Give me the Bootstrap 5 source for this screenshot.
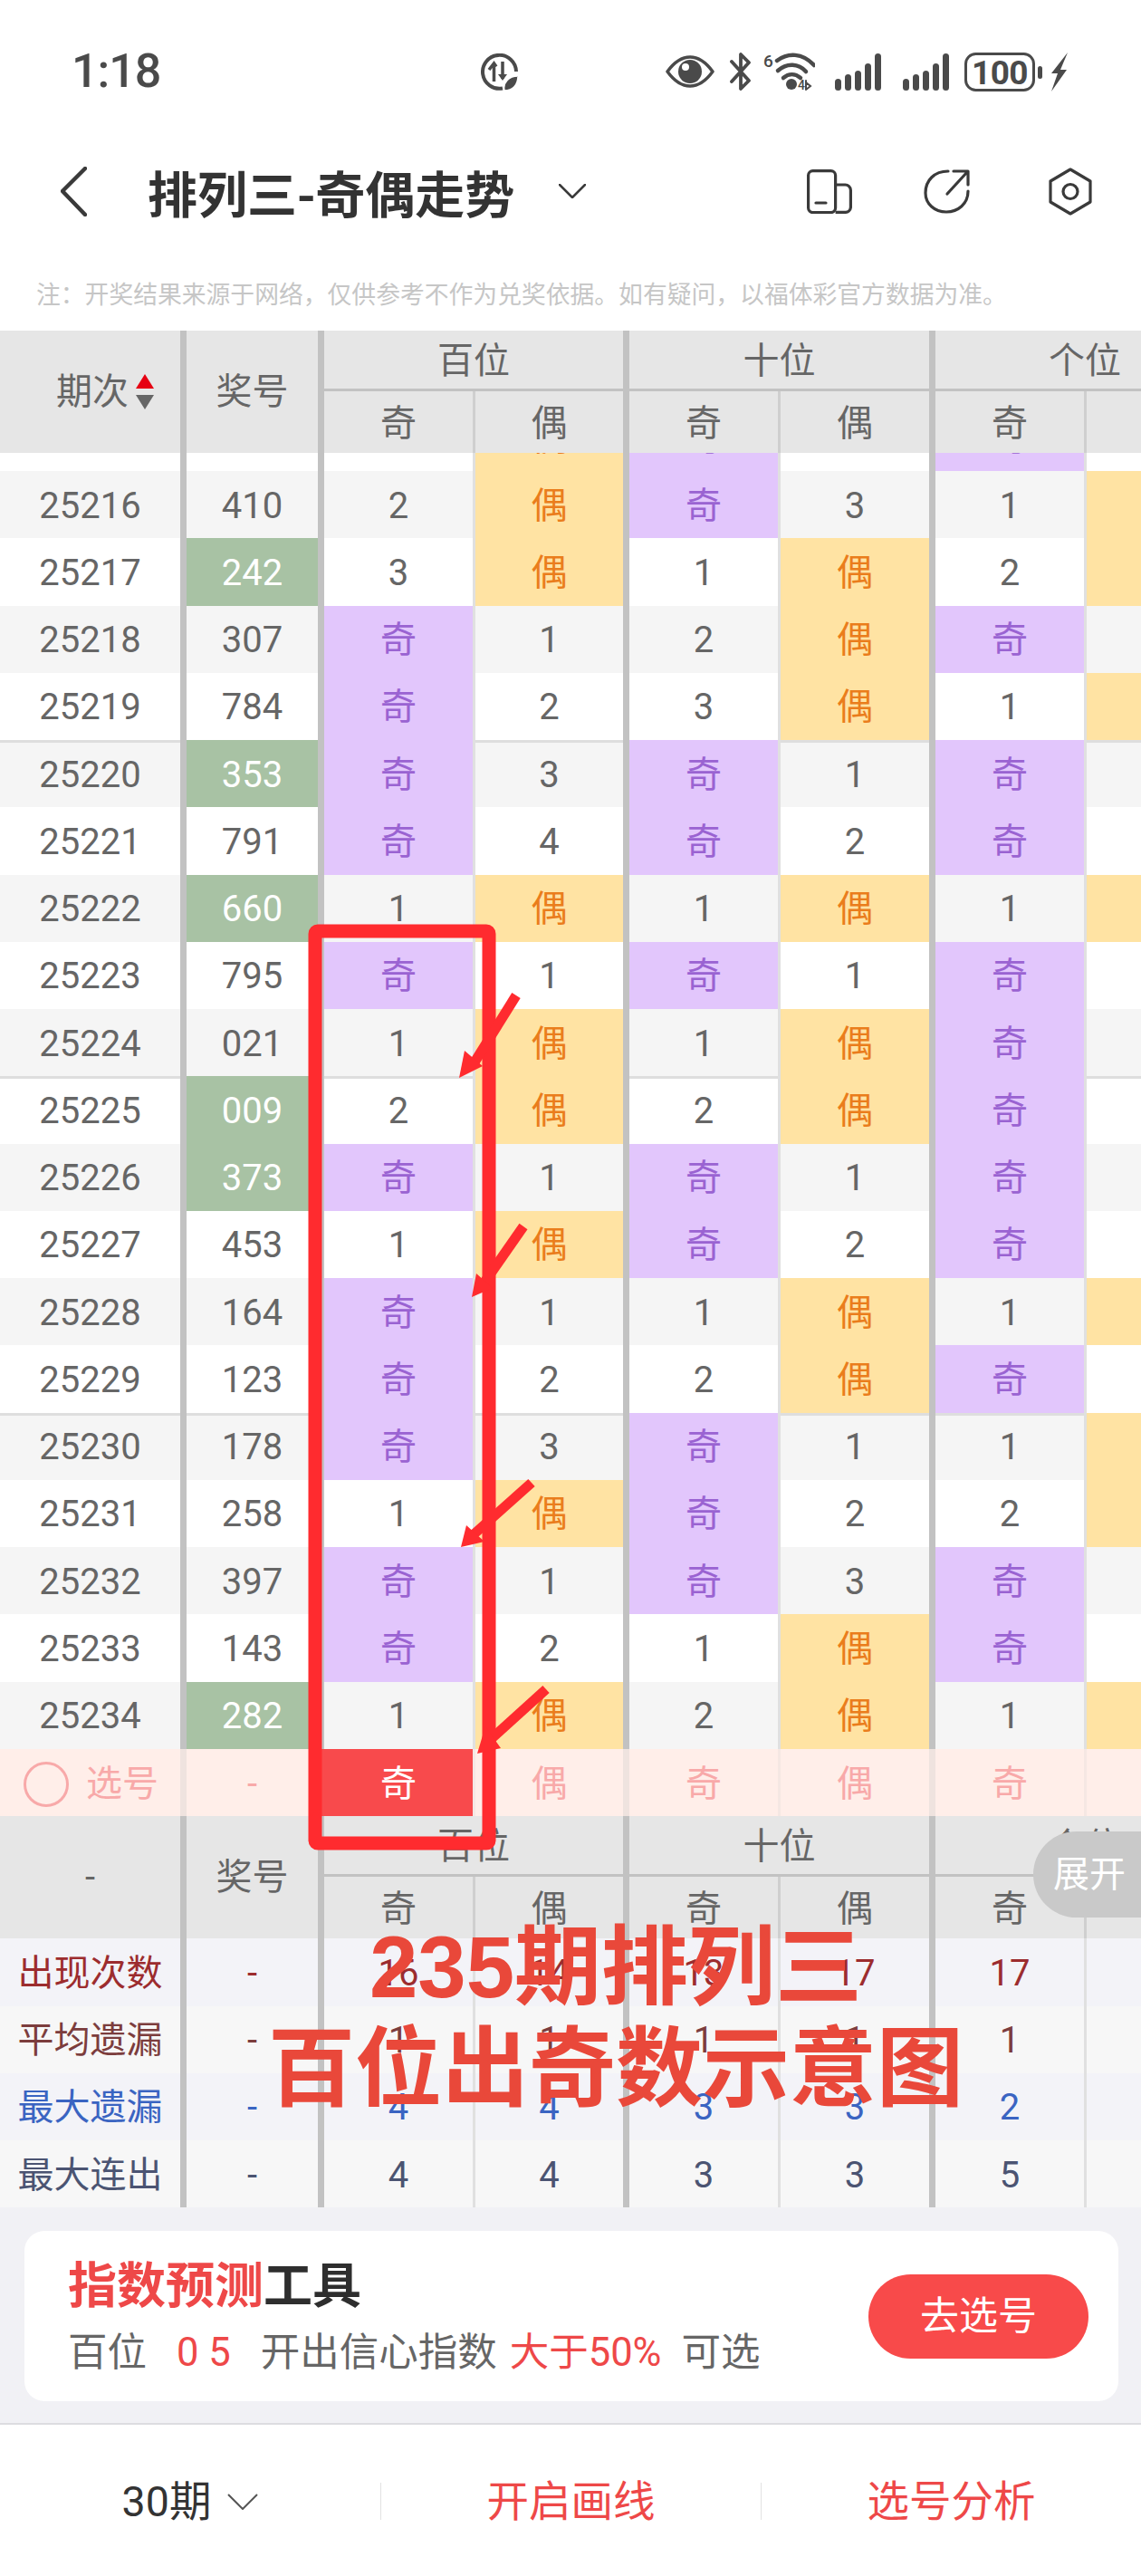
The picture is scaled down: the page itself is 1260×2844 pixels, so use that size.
<!DOCTYPE html>
<html lang="zh-CN">
<head>
  <meta charset="UTF-8">
  <meta name="viewport" content="width=device-width, initial-scale=1">
  <title>排列三-奇偶走势</title>
  <link href="https://cdn.jsdelivr.net/npm/bootstrap@5.3.0/dist/css/bootstrap.min.css" rel="stylesheet">
  <style>
    body {
      background: #fff;
      font-family: Roboto, "Noto Sans CJK SC", sans-serif;
      color: #666;
    }
    .screen { width: 1260px; height: 2844px; overflow: hidden; }

    /* status bar */
    .status-bar { height: 156px; padding: 2px 81px 0 79px; }
    .clock { font-size: 52px; font-weight: 500; color: #4a4a4a; letter-spacing: -1px; width: 99px; line-height: 1; }
    .leaf-icon { margin-left: 353px; }
    .st-bt { margin-left: 16px; }
    .st-wifi { margin-left: 13px; }
    .st-sig1 { margin-left: 22px; }
    .st-sig2 { margin-left: 24px; }
    .st-bat { margin-left: 17px; }
    .st-bolt { margin-left: 9px; }

    /* title bar */
    .title-bar { height: 110px; padding-left: 67px; padding-right: 53px; }
    .page-title { font-size: 55px; font-weight: 700; color: #333; margin-left: 67px; line-height: 1; white-space: nowrap; font-family: "Noto Sans CJK SC", sans-serif; }
    .title-chev { margin-left: 49px; }
    .act-share { margin-left: 79px; }
    .act-hex { margin-left: 86px; }

    .note-line { height: 99px; padding: 41px 0 0 40px; font-size: 26.8px; line-height: 34px; color: #c6c6c6; white-space: nowrap; font-family: "Noto Sans CJK SC", sans-serif; }

    /* trend table */
    .trend-grid {
      display: grid;
      grid-template-columns: 206px 152px 167px 170px 167px 171px 167px 170px;
      width: 1370px;
      font-size: 40px;
    }
    .tcell { display: flex; align-items: center; justify-content: center; height: 74.25px; line-height: 1; padding-top: 3px; }
    .bd-big { border-right: 7px solid #c2c2c2; }
    .bd-sub { border-right: 3px solid #e0e0e0; }

    .head-grid { background: #e6e6e6; grid-template-rows: 67px 68px; color: #666; }
    .head-grid > div { display: flex; align-items: center; justify-content: center; }
    .head-tall { grid-row: span 2; }
    .head-group { grid-column: span 2; border-bottom: 3px solid #c2c2c2; padding-top: 3px; }
    .head-sub { padding-top: 3px; }
    .head-sub.bd-sub { border-right-color: #cfcfcf; }
    .head-first { justify-content: flex-start !important; padding-left: 62px; gap: 8px; }
    .sort-svg { width: 20px; height: 40px; }

    .scroll-body { height: 1431px; overflow: hidden; }
    .scroll-body > .trend-grid:first-child { margin-top: -54.25px; }
    .row-even .tcell { background: #f5f5f5; }
    .row-odd .tcell { background: #fff; }
    .group-top .tcell.plain { box-shadow: inset 0 3px 0 #dedede; }
    .trend-grid .tcell.hit-odd { background: #e2c6fc; color: #9a63d2; }
    .trend-grid .tcell.hit-even { background: #ffe3a3; color: #ea7d1c; }
    .trend-grid .tcell.hit-pair { background: #a8c2a4; color: #fff; }

    .pick-row .tcell { background: #ffeee9; color: #f8a9a9; }
    .pick-row .bd-big { border-right-color: #efe3df; }
    .pick-row .bd-sub { border-right-color: #f5e7e3; }
    .pick-first { justify-content: flex-start !important; padding-left: 26px; gap: 19px; }
    .pick-ring { width: 50px; height: 50px; border: 3px solid #f8a9a9; border-radius: 50%; }
    .trend-grid .tcell.pick-on { background: #f84a4c; color: #fff; box-shadow: -7px 0 0 #f84a4c; position: relative; }

    .stat-a .tcell { background: #f3f3f8; }
    .stat-b .tcell { background: #f7f7f7; }
    .tone-red { color: #9c2c2e; }
    .tone-brown { color: #7c3d3d; }
    .tone-blue { color: #3a64c2; }
    .tone-slate { color: #4b5472; }

    /* bottom part */
    .tool-zone { background: #f1f1f5; height: 240px; padding: 26px 25px 0 27px; border-bottom: 2px solid #dcdce0; }
    .tool-card { height: 188px; border: 0; border-radius: 22px; padding: 27px 33px 0 48px; }
    .tool-title { font-size: 54px; font-weight: 700; line-height: 60px; color: #2e2e2e; font-family: "Noto Sans CJK SC", sans-serif; }
    .tool-red { color: #ee4848; }
    .tool-sub { font-size: 43.5px; line-height: 54px; margin-top: 21px; color: #666; white-space: nowrap; }
    .sp-a { margin-left: 33px; }
    .sp-b { margin-left: 14px; }
    .sp-c { margin-left: 22px; }
    .go-btn { width: 243px; height: 93px; margin-top: 21px; background: #f84a4a; color: #fff; font-size: 43px; line-height: 1; border: 0; }
    .go-btn:hover { background: #f84a4a; color: #fff; }

    .foot-bar { padding-top: 64px; }
    .foot-item { width: 420px; height: 41px; font-size: 46.500px; line-height: 1; gap: 18px; color: #333; }
    .foot-item + .foot-item { border-left: 1px solid #e2e2e2; color: #ee4848; }

    /* things lying on top of the table */
    .mark-svg { left: 0; top: 0; width: 1260px; height: 2844px; pointer-events: none; }
    .open-pill { top: 2022px; right: 0; width: 119px; height: 95px; background: #c9c9c9; color: #fff; font-size: 40px; border-radius: 48px 0 0 48px; padding-left: 22px; }
    .big-caption { left: 0; top: 2116px; width: 1360px; text-align: center; font-family: "Liberation Sans", "Noto Sans CJK SC", sans-serif; font-weight: 700; font-size: 96px; line-height: 112px; color: #e9483a; }
  </style>
</head>
<body>
<div class="screen position-relative">

  <!-- status bar -->
  <div class="status-bar d-flex align-items-center">
    <span class="clock">1:18</span>
    <svg class="leaf-icon" width="41" height="41" viewBox="0 0 41 41" fill="none" stroke="#4a4a4a">
      <path d="M24 38.500A18.500 18.500 0 1 1 39 20" stroke-width="4"/>
      <path d="M14.500 31V12M9 18L14.500 11L17 14.500M24 9V28" stroke-width="3.500"/>
      <path d="M19 23L24 30L29 23Z" fill="#4a4a4a" stroke="none"/>
      <path d="M26 41C24 32 31 25 41 25C41 35 35 41 26 41Z" fill="#4a4a4a" stroke="#fff" stroke-width="1.500"/>
    </svg>
    <div class="ms-auto d-flex align-items-center">
      <svg width="54" height="36" viewBox="0 0 54 36">
        <path d="M2 18C10 7 18 2 27 2S44 7 52 18C44 29 36 34 27 34S10 29 2 18Z" fill="none" stroke="#4a4a4a" stroke-width="3.500" stroke-linejoin="round"/>
        <circle cx="27" cy="18" r="13" fill="#4a4a4a"/>
        <circle cx="22" cy="13" r="4" fill="#fff"/>
      </svg>
      <svg class="st-bt" width="25" height="42" viewBox="0 0 25 42" fill="none" stroke="#4a4a4a" stroke-width="3.800" stroke-linecap="round" stroke-linejoin="round">
        <path d="M3 10L22 31L13 40V26M3 32L22 11L13 2V16"/>
      </svg>
      <svg class="st-wifi" width="57" height="42" viewBox="0 0 57 42" fill="none" stroke="#4a4a4a" stroke-linecap="round">
        <text x="0" y="16" font-family="Roboto" font-size="19" font-weight="500" fill="#4a4a4a" stroke="none">6</text>
        <path d="M15 9C27 0 43 0 56 14" stroke-width="4.500"/>
        <path d="M16 20C26 11 39 12 47 21" stroke-width="4.500"/>
        <path d="M22 28C28 23 35 23 41 28" stroke-width="4.500"/>
        <circle cx="31" cy="35" r="6" fill="#4a4a4a" stroke="none"/>
        <text x="38" y="41" font-family="Roboto" font-size="14" font-weight="500" fill="#4a4a4a" stroke="none">4</text>
        <path d="M47 31V41M47 33L52 37L47 41" stroke-width="2"/>
      </svg>
      <svg class="st-sig1" width="51" height="41" viewBox="0 0 51 41" fill="#4a4a4a">
        <rect x="0" y="28" width="7" height="13" rx="3.500"/><rect x="11" y="23" width="7" height="18" rx="3.500"/><rect x="22" y="19" width="7" height="22" rx="3.500"/><rect x="33" y="11" width="7" height="30" rx="3.500"/><rect x="44" y="0" width="7" height="41" rx="3.500"/>
      </svg>
      <svg class="st-sig2" width="51" height="41" viewBox="0 0 51 41" fill="#4a4a4a">
        <rect x="0" y="28" width="7" height="13" rx="3.500"/><rect x="11" y="23" width="7" height="18" rx="3.500"/><rect x="22" y="19" width="7" height="22" rx="3.500"/><rect x="33" y="11" width="7" height="30" rx="3.500"/><rect x="44" y="0" width="7" height="41" rx="3.500"/>
      </svg>
      <svg class="st-bat" width="86" height="43" viewBox="0 0 86 43">
        <rect x="1.500" y="1.500" width="75" height="40" rx="11" fill="none" stroke="#4a4a4a" stroke-width="3"/>
        <text x="39" y="35" text-anchor="middle" font-family="Roboto" font-size="37" font-weight="700" letter-spacing="-0.500" fill="#4a4a4a">100</text>
        <rect x="81" y="15" width="5" height="14" rx="2.500" fill="#4a4a4a"/>
      </svg>
      <svg class="st-bolt" width="19" height="43" viewBox="0 0 19 43" fill="#4a4a4a">
        <path d="M19 0L1 23H8L1 43L18 19H11Z"/>
      </svg>
    </div>
  </div>

  <!-- title bar -->
  <div class="title-bar d-flex align-items-center">
    <svg width="29" height="55" viewBox="0 0 29 55" fill="none" stroke="#3a3a3a" stroke-width="4.500" stroke-linecap="round" stroke-linejoin="round"><path d="M27 2L2 27L27 53"/></svg>
    <span class="page-title">排列三-奇偶走势</span>
    <svg class="title-chev" width="30" height="16" viewBox="0 0 30 16" fill="none" stroke="#3a3a3a" stroke-width="2.500" stroke-linecap="round" stroke-linejoin="round"><path d="M1 1L15 15L29 1"/></svg>
    <div class="ms-auto d-flex align-items-center">
      <svg width="50" height="49" viewBox="0 0 50 49" fill="none" stroke="#3a3a3a" stroke-width="3.200" stroke-linejoin="round">
        <rect x="1.600" y="1.600" width="30" height="46" rx="5"/>
        <path d="M31.600 17H42A6 6 0 0 1 48.400 23V42A6 6 0 0 1 42 47.400H31.600"/>
        <path d="M10 37H21" stroke-linecap="round"/>
      </svg>
      <svg class="act-share" width="51" height="49" viewBox="0 0 51 49" fill="none" stroke="#3a3a3a" stroke-width="3.200" stroke-linecap="round" stroke-linejoin="round">
        <path d="M27 2C12 2 2 12 2 26C2 38 12 47 25 47C38 47 49 38 49 24"/>
        <path d="M26 27L48 3M33 2H49V17"/>
      </svg>
      <svg class="act-hex" width="50" height="53" viewBox="0 0 50 53" fill="none" stroke="#3a3a3a" stroke-width="3.200" stroke-linejoin="round">
        <path d="M25 2L47 15V38L25 51L3 38V15Z"/>
        <circle cx="25" cy="26.500" r="8"/>
      </svg>
    </div>
  </div>

  <div class="note-line">注：开奖结果来源于网络，仅供参考不作为兑奖依据。如有疑问，以福体彩官方数据为准。</div>

  <!-- table head -->
  <div class="trend-grid head-grid">
    <div class="head-tall head-first bd-big">
      <span>期次</span>
      <svg class="sort-svg" viewBox="0 0 20 40"><path d="M10 0L20 16H0Z" fill="#e60012"/><path d="M0 23H20L10 39Z" fill="#666"/></svg>
    </div>
    <div class="head-tall bd-big">奖号</div>
    <div class="head-group bd-big">百位</div>
    <div class="head-group bd-big">十位</div>
    <div class="head-group bd-big">个位</div>
    <div class="head-sub bd-sub">奇</div><div class="head-sub bd-big">偶</div>
    <div class="head-sub bd-sub">奇</div><div class="head-sub bd-big">偶</div>
    <div class="head-sub bd-sub">奇</div><div class="head-sub bd-big">偶</div>
  </div>

  <!-- draw rows, filled by script -->
  <div class="scroll-body" id="drawRows"></div>

  <!-- pick row -->
  <div class="trend-grid pick-row">
    <div class="tcell pick-first bd-big"><span class="pick-ring"></span><span>选号</span></div>
    <div class="tcell bd-big">-</div>
    <div class="tcell pick-on bd-sub">奇</div><div class="tcell bd-big">偶</div>
    <div class="tcell bd-sub">奇</div><div class="tcell bd-big">偶</div>
    <div class="tcell bd-sub">奇</div><div class="tcell bd-big">偶</div>
  </div>

  <!-- head repeated under the rows -->
  <div class="trend-grid head-grid">
    <div class="head-tall bd-big">-</div>
    <div class="head-tall bd-big">奖号</div>
    <div class="head-group bd-big">百位</div>
    <div class="head-group bd-big">十位</div>
    <div class="head-group bd-big">个位</div>
    <div class="head-sub bd-sub">奇</div><div class="head-sub bd-big">偶</div>
    <div class="head-sub bd-sub">奇</div><div class="head-sub bd-big">偶</div>
    <div class="head-sub bd-sub">奇</div><div class="head-sub bd-big">偶</div>
  </div>

  <div id="statRows"></div>

  <!-- tool card -->
  <div class="tool-zone">
    <div class="card tool-card d-flex flex-row justify-content-between">
      <div>
        <div class="tool-title"><span class="tool-red">指数预测</span>工具</div>
        <div class="tool-sub">百位<span class="tool-red sp-a">0 5</span><span class="sp-a">开出信心指数</span><span class="tool-red sp-b">大于50%</span><span class="sp-c">可选</span></div>
      </div>
      <button class="btn rounded-pill go-btn" type="button">去选号</button>
    </div>
  </div>

  <div class="foot-bar d-flex">
    <div class="foot-item d-flex align-items-center justify-content-center">
      <span>30期</span>
      <svg width="34" height="18" viewBox="0 0 34 18" fill="none" stroke="#555" stroke-width="2"><path d="M1 1L17 17L33 1"/></svg>
    </div>
    <div class="foot-item d-flex align-items-center justify-content-center">开启画线</div>
    <div class="foot-item d-flex align-items-center justify-content-center">选号分析</div>
  </div>

  <!-- hand drawn marks over the table -->
  <svg class="mark-svg position-absolute" viewBox="0 0 1260 2844" fill="none">
    <rect x="348" y="1028" width="192" height="1007" rx="3" stroke="#ff2b2f" stroke-width="15"/>
    <g stroke="#ff2b2f" stroke-width="11">
      <path d="M570 1099L522 1176"/>
      <path d="M578 1354L532 1420"/>
      <path d="M587 1637L522 1695"/>
      <path d="M603 1865L540 1922"/>
    </g>
    <g fill="#ff2b2f">
      <path d="M507 1190L513 1160L533 1177Z"/>
      <path d="M521 1432L526 1406L544 1422Z"/>
      <path d="M509 1708L515 1684L535 1702Z"/>
      <path d="M527 1936L536 1906L553 1930Z"/>
    </g>
  </svg>
  <div class="open-pill position-absolute d-flex align-items-center">展开</div>
  <div class="big-caption position-absolute">235期排列三<br>百位出奇数示意图</div>
</div>

<script src="https://cdn.jsdelivr.net/npm/bootstrap@5.3.0/dist/js/bootstrap.bundle.min.js"></script>
<script>
  // first item is the row cut off by the header
  const draws = ['813','410','242','307','784','353','791','660','795','021','009','373','453','164','123','178','258','397','143','282']
  const miss = [{odd:0, even:0}, {odd:0, even:1}, {odd:0, even:0}]

  function digitCells(d, i){
    const isOdd = Number(d) % 2 === 1
    const m = miss[i]
    if(isOdd){ m.odd = 0; m.even++ } else { m.even = 0; m.odd++ }
    const oddCell = isOdd ? `<div class="tcell hit-odd bd-sub">奇</div>` : `<div class="tcell plain bd-sub">${m.odd}</div>`
    const evenCell = isOdd ? `<div class="tcell plain bd-big">${m.even}</div>` : `<div class="tcell hit-even bd-big">偶</div>`
    return oddCell + evenCell
  }

  function printRows(){
    const rows = draws.map((no, idx) => {
      const issue = 25215 + idx
      const pair = new Set(no).size < 3
      const stripe = issue % 2 === 0 ? 'row-even' : 'row-odd'
      const group = issue % 5 === 0 ? 'group-top' : ''
      return `<div class="trend-grid ${stripe} ${group}">
        <div class="tcell plain bd-big">${issue}</div>
        <div class="tcell ${pair ? 'hit-pair' : 'plain'} bd-big">${no}</div>
        ${[...no].map(digitCells).join("")}
      </div>`
    }).join("")
    document.querySelector("#drawRows").innerHTML = rows
  }

  const stats = [
    {name:'出现次数', tone:'tone-red', bg:'stat-a', vals:[16,14,13,17,17,13]},
    {name:'平均遗漏', tone:'tone-brown', bg:'stat-b', vals:[1,1,1,1,1,1]},
    {name:'最大遗漏', tone:'tone-blue', bg:'stat-a', vals:[4,4,3,3,2,2]},
    {name:'最大连出', tone:'tone-slate', bg:'stat-b', vals:[4,4,3,3,5,2]}
  ]

  function printStats(){
    const rows = stats.map(s => `
      <div class="trend-grid ${s.bg} ${s.tone}">
        <div class="tcell bd-big">${s.name}</div>
        <div class="tcell bd-big">-</div>
        ${s.vals.map((v, i) => `<div class="tcell ${i % 2 ? 'bd-big' : 'bd-sub'}">${v}</div>`).join("")}
      </div>`).join("")
    document.querySelector("#statRows").innerHTML = rows
  }

  printRows()
  printStats()
</script>
</body>
</html>
